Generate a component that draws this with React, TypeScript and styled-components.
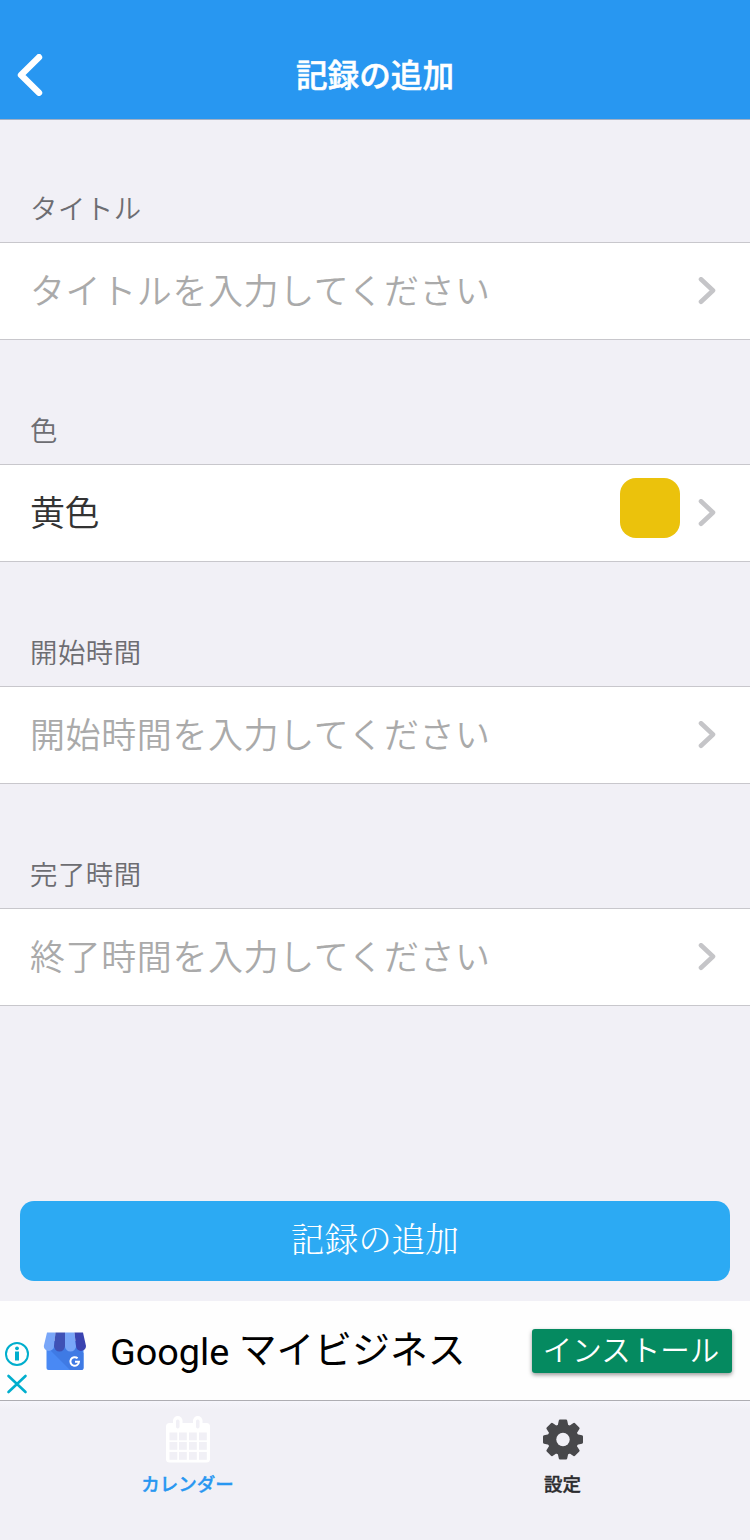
import React from 'react';
import styled, { createGlobalStyle } from 'styled-components';

const GlobalStyle = createGlobalStyle`
  * { box-sizing: border-box; }
  body {
    margin: 0;
    background: #f1f0f6;
    font-family: "Noto Sans CJK JP", sans-serif;
  }
`;

const Screen = styled.div`
  width: 750px;
  height: 1540px;
  display: flex;
  flex-direction: column;
  overflow: hidden;
  background: #f1f0f6;
`;

const NavBar = styled.header`
  height: 120px;
  flex: none;
  padding: 30px 18px 0 17px;
  display: grid;
  grid-template-columns: 27px 1fr 26px;
  align-items: center;
  background: #2897f1;
  border-bottom: 1px solid #a3b0c4;
`;

const BackButton = styled.button`
  border: 0;
  padding: 0;
  background: none;
  display: flex;
`;

const NavTitle = styled.h1`
  margin: 0;
  padding-bottom: 4px;
  text-align: center;
  color: #fff;
  font-size: 31.6px;
  font-weight: 500;
  line-height: 46px;
  -webkit-text-stroke: 0.5px #fff;
`;

const Form = styled.main`
  flex: none;
  height: 1081px;
  margin-top: -2px;
`;

const SectionLabel = styled.h2`
  margin: 0;
  height: 124px;
  padding: 69px 0 0 30px;
  color: #6d6d72;
  font-size: 27.4px;
  font-weight: 350;
  line-height: 40px;
  letter-spacing: 0.5px;
`;

const Row = styled.div`
  height: 98px;
  padding: 0 34px 1px 30px;
  display: flex;
  align-items: center;
  background: #fff;
  border: solid #c8c7cc;
  border-width: 1px 0;
`;

const RowText = styled.span<{ $filled?: boolean }>`
  flex: 1;
  color: ${(p) => (p.$filled ? '#333' : '#aaa')};
  font-size: 35px;
  font-weight: 350;
  line-height: 50px;
  letter-spacing: ${(p) => (p.$filled ? '-0.5px' : '0.6px')};
  padding-bottom: 3px;
`;

const Swatch = styled.span`
  width: 60px;
  height: 60px;
  margin: 0 18px 9px 0;
  border-radius: 16px;
  background: #ebc20c;
`;

const SubmitButton = styled.button`
  flex: none;
  height: 80px;
  margin: 2px 20px 20px;
  padding: 0 0 6px;
  border: 0;
  border-radius: 14px;
  background: #2caaf3;
  color: #fff;
  font: 300 33.6px/48px "Noto Serif CJK JP", "Noto Sans CJK JP", serif;
`;

const AdBanner = styled.aside`
  flex: none;
  height: 99px;
  padding: 0 18px 0 4px;
  display: flex;
  background: #fefefe;
`;

const AdMarks = styled.div`
  width: 26px;
  padding-top: 40px;
`;

const AdLogo = styled.div`
  padding: 30px 0 0 13px;
  width: 80px;
`;

const AdTitle = styled.div`
  flex: 1;
  padding-top: 20px;
  color: #000;
  font: 400 37.8px/58px Roboto, "Noto Sans CJK JP", sans-serif;
  white-space: nowrap;
`;

const AdBrand = styled.span`
  line-height: 1;
  vertical-align: -2px;
`;

const InstallButton = styled.button`
  width: 200px;
  height: 44px;
  margin-top: 28px;
  padding: 0 2px 5px 0;
  border: 0;
  border-radius: 3px;
  background: #058a60;
  box-shadow: 0 2px 4px rgba(0, 0, 0, 0.4);
  color: #fff;
  font: 350 29.5px/39px "Noto Sans CJK JP", sans-serif;
  white-space: nowrap;
`;

const TabBar = styled.nav`
  flex: none;
  height: 140px;
  display: grid;
  grid-template-columns: 1fr 1fr;
  border-top: 1px solid #aeadb2;
  background: linear-gradient(#f6f5fb, #f1f0f6 8px);
`;

const Tab = styled.a<{ $active?: boolean }>`
  display: flex;
  flex-direction: column;
  align-items: center;
  padding-top: 14px;
  color: ${(p) => (p.$active ? '#2897f1' : '#2c2c2e')};
  font-size: 18.5px;
  font-weight: 500;
  line-height: 28px;
  -webkit-text-stroke: 0.35px currentColor;
`;

const TabIcon = styled.span`
  height: 54px;
  display: flex;
`;

const Chevron = () => (
  <svg width="18" height="28" viewBox="0 0 18 28" fill="none" stroke="#c5c5c8" strokeWidth="4.6" strokeLinecap="round" strokeLinejoin="round">
    <path d="M3 2.300 15 13.500 3 24.700" />
  </svg>
);

const BackIcon = () => (
  <svg width="27" height="42" viewBox="0 0 27 42" fill="none" stroke="#fff" strokeWidth="6.4" strokeLinecap="round" strokeLinejoin="round">
    <path d="M22 3.200 4 21 22 38.800" />
  </svg>
);

const AdChoicesIcon = () => (
  <svg width="26" height="56" viewBox="0 0 26 56" fill="none" stroke="#00aecd">
    <circle cx="13" cy="13" r="11" strokeWidth="2" />
    <circle cx="13" cy="7.300" r="1.900" fill="#00aecd" stroke="none" />
    <path d="M11 10.500h4v9h-4z" fill="#00aecd" stroke="none" />
    <path d="M4.500 35 21.500 51M21.500 35 4.500 51" strokeWidth="2.600" strokeLinecap="round" />
  </svg>
);

const StoreIcon = () => (
  <svg width="44" height="40" viewBox="0 0 44 40">
    <path d="M3.500 10h37v27a2 2 0 0 1-2 2h-33a2 2 0 0 1-2-2z" fill="#4989f4" />
    <path d="M6 18 27 39h11.500a2 2 0 0 0 2-2V22l-5-5z" fill="#3f7ae4" />
    <path d="M4 1.500h8.500L11 15a5 5 0 0 1-10.200 0z" fill="#79a6f8" />
    <path d="M12.500 1.500H22V15a5.400 5.400 0 0 1-11 0z" fill="#3f51b5" />
    <path d="M22 1.500h9.500L33 15a5.500 5.500 0 0 1-11 0z" fill="#79a6f8" />
    <path d="M31.500 1.500H40L43 15a5 5 0 0 1-10 0z" fill="#3a43b0" />
    <path d="M34.600 27.300a4.300 4.300 0 1 0 1.400 3.500h-4" fill="none" stroke="#fff" strokeWidth="2" />
  </svg>
);

const CalendarIcon = () => (
  <svg width="44" height="48" viewBox="0 0 44 48">
    <rect x="0" y="8" width="44" height="39.500" rx="3.500" fill="#fff" />
    <rect x="7" y="1" width="9.500" height="16" rx="4.700" fill="#fff" />
    <rect x="27" y="1" width="9.500" height="16" rx="4.700" fill="#fff" />
    <g fill="#f1f0f6">
      <rect x="10" y="4.500" width="3.500" height="9" rx="1.700" />
      <rect x="30" y="4.500" width="3.500" height="9" rx="1.700" />
      {[17.5, 27, 37].map((y) =>
        [3.5, 13, 23, 33].map((x) => <rect key={`${x}-${y}`} x={x} y={y} width="7.800" height="7.800" />),
      )}
    </g>
  </svg>
);

const GearIcon = () => (
  <svg width="42" height="48" viewBox="-21 -24.500 42 48">
    <g fill="#48484b">
      <circle r="15.500" />
      {[0, 45, 90, 135, 180, 225, 270, 315].map((a) => (
        <path key={a} d="M-5.500-13-4.200-19Q-4-20-3-20H3Q4-20 4.200-19L5.500-13z" transform={`rotate(${a})`} />
      ))}
    </g>
    <circle r="6.700" fill="#f1f0f6" />
  </svg>
);

const fields = [
  { label: 'タイトル', text: 'タイトルを入力してください' },
  { label: '色', text: '黄色', color: true },
  { label: '開始時間', text: '開始時間を入力してください' },
  { label: '完了時間', text: '終了時間を入力してください' },
];

export default function App() {
  return (
    <Screen>
      <GlobalStyle />
      <NavBar>
        <BackButton aria-label="戻る">
          <BackIcon />
        </BackButton>
        <NavTitle>記録の追加</NavTitle>
      </NavBar>
      <Form>
        {fields.map((f) => (
          <section key={f.label}>
            <SectionLabel>{f.label}</SectionLabel>
            <Row>
              <RowText $filled={f.color}>{f.text}</RowText>
              {f.color && <Swatch />}
              <Chevron />
            </Row>
          </section>
        ))}
      </Form>
      <SubmitButton>記録の追加</SubmitButton>
      <AdBanner>
        <AdMarks>
          <AdChoicesIcon />
        </AdMarks>
        <AdLogo>
          <StoreIcon />
        </AdLogo>
        <AdTitle>
          <AdBrand>Google</AdBrand> マイビジネス
        </AdTitle>
        <InstallButton>インストール</InstallButton>
      </AdBanner>
      <TabBar>
        <Tab $active>
          <TabIcon>
            <CalendarIcon />
          </TabIcon>
          カレンダー
        </Tab>
        <Tab>
          <TabIcon>
            <GearIcon />
          </TabIcon>
          設定
        </Tab>
      </TabBar>
    </Screen>
  );
}
